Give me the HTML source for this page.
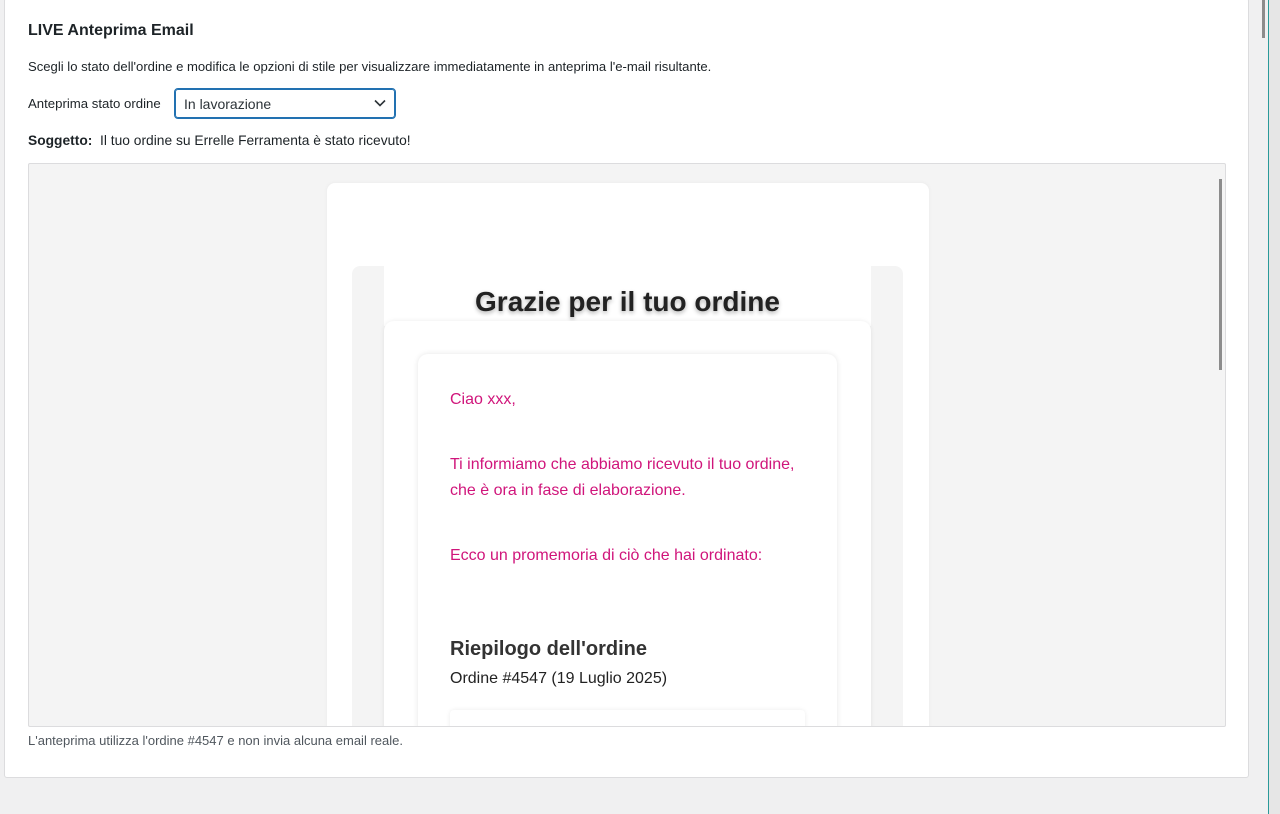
<!DOCTYPE html>
<html><head><meta charset="utf-8"><style>
*{box-sizing:border-box;margin:0;padding:0}
html,body{overflow:hidden}
body{width:1280px;height:814px;background:#f0f0f1;font-family:"Liberation Sans",sans-serif;position:relative;color:#1d2327}
.card{position:absolute;left:4px;top:-2px;width:1245px;height:780px;background:#fff;border:1px solid #dcdcde;border-radius:3px}
.abs{position:absolute}
h2{position:absolute;left:28px;top:22px;font-size:16px;font-weight:bold;color:#1d2327}
.t13{font-size:13px;color:#1d2327}
.sel{position:absolute;left:174px;top:88px;width:222px;height:31px;border:1px solid #2271b1;border-radius:4px;box-shadow:0 0 0 1px #2271b1 inset;font-size:14px;color:#2c3338;padding:7px 9px}
.prev{position:absolute;left:28px;top:163px;width:1198px;height:564px;background:#f4f4f4;border:1px solid #dcdcde;border-radius:2px;overflow:hidden}
.em{position:absolute;left:298px;top:19px;width:602px;height:545px;background:#fff;border-radius:8px 8px 0 0;box-shadow:0 0 4px rgba(0,0,0,.05);overflow:hidden}
.wrap{position:absolute;left:25px;top:83px;width:551px;height:600px;background:#f4f4f4;border-radius:8px}
.hdr{position:absolute;left:32px;top:0;width:487px;height:60px;background:#fff}
.hdr div{position:absolute;left:0;right:0;top:20px;text-align:center;font-size:28px;font-weight:bold;color:#222;text-shadow:0 2px 4px rgba(0,0,0,.3)}
.cont{position:absolute;left:32px;top:55px;width:487px;height:600px;background:#fff;border-radius:10px;box-shadow:0 0 5px rgba(0,0,0,.08)}
.in{position:absolute;left:34px;top:33px;width:419px;height:600px;background:#fff;border-radius:10px;box-shadow:0 0 6px rgba(0,0,0,.1)}
.p{position:absolute;left:32px;font-size:16px;color:#d0157b;line-height:26px}
</style></head><body>
<div class="card"></div>
<h2>LIVE Anteprima Email</h2>
<div class="abs t13" style="left:28px;top:59px;font-size:13.1px">Scegli lo stato dell'ordine e modifica le opzioni di stile per visualizzare immediatamente in anteprima l'e-mail risultante.</div>
<div class="abs t13" style="left:28px;top:96px;font-size:13.2px">Anteprima stato ordine</div>
<div class="sel">In lavorazione<svg class="abs" style="right:9px;top:10px" width="12" height="8" viewBox="0 0 12 8"><path d="M1 1.5l5 5 5-5" fill="none" stroke="#2c3338" stroke-width="1.6"/></svg></div>
<div class="abs t13" style="left:28px;top:133px;font-size:13.8px"><b>Soggetto:</b>&nbsp;&nbsp;Il tuo ordine su Errelle Ferramenta è stato ricevuto!</div>
<div class="prev">
 <div class="em">
  <div class="wrap">
   <div class="hdr"><div>Grazie per il tuo ordine</div></div>
   <div class="cont">
    <div class="in">
     <div class="p" style="top:33px">Ciao xxx,</div>
     <div class="p" style="top:98px">Ti informiamo che abbiamo ricevuto il tuo ordine,<br>che è ora in fase di elaborazione.</div>
     <div class="p" style="top:189px">Ecco un promemoria di ciò che hai ordinato:</div>
     <div class="abs" style="left:32px;top:284px;font-size:20px;font-weight:bold;color:#333">Riepilogo dell'ordine</div>
     <div class="abs" style="left:32px;top:316px;font-size:16px;color:#222">Ordine #4547 (19 Luglio 2025)</div>
     <div class="abs" style="left:32px;top:356px;width:355px;height:100px;background:#fff;border-radius:4px;box-shadow:0 0 5px rgba(0,0,0,.08)"></div>
    </div>
   </div>
  </div>
 </div>
 <div class="abs" style="left:1190px;top:15px;width:3px;height:191px;background:#8c8c8c"></div>
</div>
<div class="abs" style="left:28px;top:733px;font-size:13px;color:#50575e">L'anteprima utilizza l'ordine #4547 e non invia alcuna email reale.</div>
<div class="abs" style="left:1262px;top:0;width:3px;height:38px;background:#8c8c8c"></div>
<div class="abs" style="left:1268px;top:0;width:1px;height:814px;background:#2a9a9a"></div>
<div class="abs" style="left:1269px;top:0;width:11px;height:814px;background:#e6e6e6"></div>
</body></html>
